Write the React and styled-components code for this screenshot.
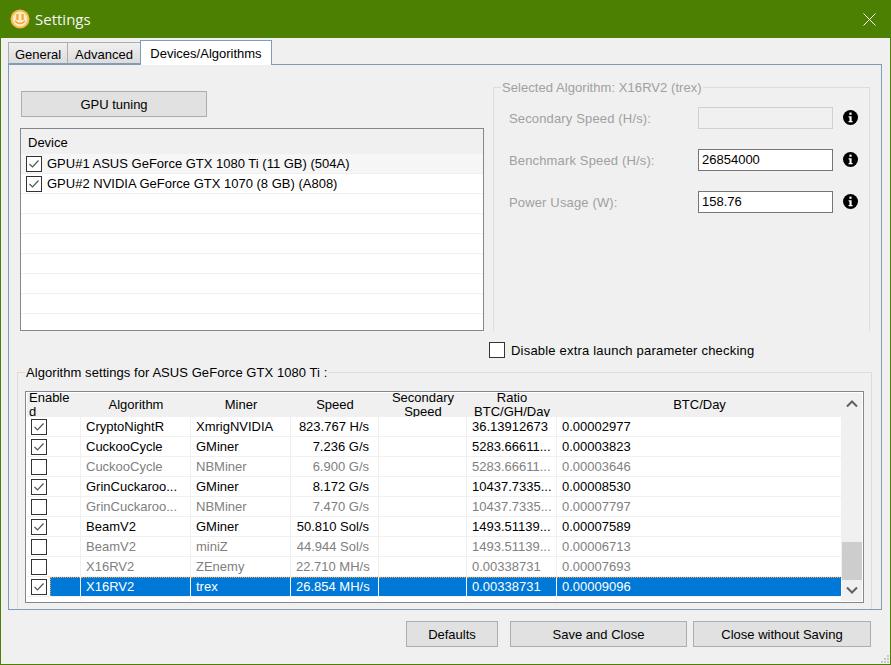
import React from 'react';
import styled, { createGlobalStyle } from 'styled-components';

const Global = createGlobalStyle`
  html, body { margin: 0; padding: 0; background: #f0f0f0; }
  * { box-sizing: border-box; }
  body { font-family: "Liberation Sans", Arial, sans-serif; font-size: 13px; color: #000; }
`;

const Window = styled.div`
  position: relative;
  width: 891px;
  height: 665px;
  background: #f0f0f0;
  border: 1px solid #4c8003;
  border-top: none;
  display: flex;
  flex-direction: column;
`;

const TitleBar = styled.div`
  height: 38px;
  margin: 0 -1px;
  background: #4c8003;
  display: flex;
  align-items: center;
  padding: 0 15px 0 10px;
  gap: 5px;
  color: #f6f6f6;
  font-family: "Open Sans", sans-serif;
  font-size: 15px;
`;

const TitleText = styled.span`
  flex: 1;
`;

const Body = styled.div`
  padding: 2px 8px 0 7px;
`;

const Tabs = styled.div`
  display: flex;
  align-items: flex-end;
  height: 24px;
`;

const Tab = styled.div`
  height: ${p => (p.$active ? '25px' : '22px')};
  width: ${p => p.$w}px;
  margin-bottom: ${p => (p.$active ? '-1px' : '0')};
  padding-top: ${p => (p.$active ? '0' : '2px')};
  display: flex;
  align-items: center;
  justify-content: center;
  background: ${p => (p.$active ? '#fff' : 'linear-gradient(#f0f0f0, #dcdcdc)')};
  border: 1px solid ${p => (p.$active ? '#7f9db9' : '#acacac')};
  border-bottom: ${p => (p.$active ? 'none' : '1px solid #7f9db9')};
  border-right: ${p => (p.$active ? '1px solid #7f9db9' : 'none')};
  position: relative;
`;

const Panel = styled.div`
  width: 874px;
  height: 546px;
  border: 1px solid #7f9db9;
  padding: 26px 0 0 8px;
  display: flex;
  flex-direction: column;
`;

const TopRow = styled.div`
  display: flex;
  height: 240px;
`;

const LeftCol = styled.div`
  width: 476px;
  flex: none;
  padding-left: 4px;
  display: flex;
  flex-direction: column;
`;

const Button = styled.div`
  width: ${p => p.$w}px;
  height: 26px;
  margin-right: ${p => p.$mr || 0}px;
  display: flex;
  align-items: center;
  justify-content: center;
  background: #e1e1e1;
  border: 1px solid #adadad;
`;

const DeviceList = styled.div`
  width: 464px;
  height: 203px;
  margin: 11px 0 0 -1px;
  border: 1px solid #828790;
  background: #fff;
  display: flex;
  flex-direction: column;
  overflow: hidden;
`;

const DeviceHead = styled.div`
  height: 25px;
  flex: none;
  padding: 6px 0 0 7px;
  background: #f0f0f0;
  line-height: 15px;
`;

const DeviceRow = styled.div`
  height: 20px;
  flex: none;
  display: flex;
  align-items: center;
  gap: 5px;
  padding-left: 5px;
  border-bottom: 1px solid #f0f0f0;
  background: ${p => (p.$soft ? '#f6f6f6' : '#fff')};
`;

const Box = styled.span`
  width: 16px;
  height: 16px;
  flex: none;
  border: 1px solid #333;
  background: #fff;
  display: flex;
  align-items: center;
  justify-content: center;
`;

const Group = styled.fieldset`
  margin: 0;
  min-width: 0;
  padding: 0;
  border: 1px solid #dcdcdc;
  border-bottom: none;
  legend {
    margin-left: ${p => p.$legendX || 0}px;
    padding: 0 1px;
    line-height: 15px;
    letter-spacing: 0.06px;
    color: ${p => (p.$muted ? '#a0a0a0' : '#000')};
  }
`;

const AlgoSide = styled(Group)`
  width: 377px;
  height: 251px;
  flex: none;
  margin-top: -11px;
  padding: 12px 0 0 15px;
  display: flex;
  flex-direction: column;
  gap: 20px;
`;

const Field = styled.div`
  display: flex;
  align-items: center;
  height: 22px;
`;

const FieldLabel = styled.span`
  width: 189px;
  color: #a0a0a0;
  letter-spacing: 0.15px;
`;

const Input = styled.div`
  width: 135px;
  height: 22px;
  border: 1px solid ${p => (p.$off ? '#d0d0d0' : '#767676')};
  background: ${p => (p.$off ? '#f0f0f0' : '#fff')};
  padding: 0 3px;
  line-height: 20px;
`;

const Info = styled.svg`
  width: 15px;
  height: 15px;
  margin: -2px 0 0 10px;
`;

const CheckRow = styled.label`
  display: flex;
  align-items: center;
  gap: 6px;
  height: 16px;
  margin: 11px 0 0 472px;
  letter-spacing: 0.2px;
`;

const AlgoGroup = styled(Group)`
  width: 855px;
  flex: 1;
  margin-top: 7px;
  padding: 0 7px;
`;

const Table = styled.div`
  width: 839px;
  height: 212px;
  margin-top: 11px;
  border: 1px solid #828790;
  background: #fff;
  display: flex;
  padding: 1px;
`;

const Rows = styled.div`
  width: 815px;
  flex: none;
  display: flex;
  flex-direction: column;
`;

const cols = '54px 110px 100px 88px 88px 90px 285px';

const HeadRow = styled.div`
  display: grid;
  grid-template-columns: ${cols};
  height: 24px;
  flex: none;
  background: #f0f0f0;
  overflow: hidden;
`;

const HeadCell = styled.div`
  height: 24px;
  display: flex;
  align-items: center;
  justify-content: ${p => (p.$left ? 'flex-start' : 'center')};
  text-align: ${p => (p.$left ? 'left' : 'center')};
  line-height: 14.5px;
  padding-left: ${p => (p.$left ? '2px' : '0')};
  padding-right: ${p => (p.$left ? '9px' : '0')};
  overflow-wrap: anywhere;
`;

const Row = styled.div`
  display: grid;
  grid-template-columns: ${cols};
  height: 20px;
  flex: none;
  color: ${p => (p.$off ? '#808080' : '#000')};
`;

const Cell = styled.div`
  height: 20px;
  line-height: ${p => (p.$sel ? '17px' : '19px')};
  padding: 0 5px;
  white-space: nowrap;
  overflow: hidden;
  text-align: ${p => (p.$right ? 'right' : 'left')};
  padding-right: ${p => (p.$right ? '9px' : '5px')};
  border-right: 1px solid ${p => (p.$sel ? '#fff' : '#f0f0f0')};
  border-bottom: 1px solid #f0f0f0;
  border-top: ${p => (p.$sel ? '1px dotted #f2a341' : 'none')};
  background: ${p => (p.$sel ? '#0078d7' : '#fff')};
  color: ${p => (p.$sel ? '#fff' : 'inherit')};
`;

const CheckCell = styled.div`
  height: 20px;
  display: flex;
  border-right: 1px solid #f0f0f0;
  border-bottom: 1px solid #f0f0f0;
  padding: 2px 0 0 4px;
`;

const CheckFill = styled.span`
  flex: 1;
  height: 19px;
  margin: -2px 0 0 3px;
  background: ${p => (p.$sel ? '#0078d7' : 'transparent')};
  border-left: ${p => (p.$sel ? '1px dotted #f2a341' : 'none')};
  border-top: ${p => (p.$sel ? '1px dotted #f2a341' : 'none')};
`;

const Filler = styled.div`
  display: grid;
  grid-template-columns: ${cols};
  flex: 1;
  div { border-right: 1px solid #f0f0f0; }
`;

const ScrollBar = styled.div`
  width: 20px;
  flex: none;
  background: #f0f0f0;
  display: flex;
  flex-direction: column;
`;

const Track = styled.div`
  flex: 1;
  display: flex;
  flex-direction: column;
  justify-content: flex-end;
`;

const Thumb = styled.div`
  height: 38px;
  background: #cdcdcd;
`;

const Arrow = styled.svg`
  width: 20px;
  height: 21px;
  flex: none;
`;

const Footer = styled.div`
  display: flex;
  justify-content: flex-end;
  gap: 6px;
  padding: 11px 11px 0 0;
`;

const Grip = styled.svg`
  position: absolute;
  right: 0;
  bottom: 0;
  width: 12px;
  height: 12px;
`;

const Check = () => (
  <svg width="12" height="10" viewBox="0 0 12 10">
    <path d="M1.5 5 L4.5 8 L10.5 1.5" fill="none" stroke="#555" strokeWidth="1.2" />
  </svg>
);

const InfoIcon = () => (
  <Info viewBox="0 0 15 15">
    <circle cx="7.5" cy="7.5" r="7.5" fill="#000" />
    <rect x="6.4" y="2.6" width="2.2" height="2.2" fill="#fff" />
    <path d="M5.6 6.2 H8.6 V11 H9.6 V12.2 H5.6 V11 H6.5 V7.4 H5.6 Z" fill="#fff" />
  </Info>
);

const Logo = () => (
  <svg width="20" height="20" viewBox="0 0 20 20">
    <circle cx="10" cy="10" r="9.5" fill="#f7bb4d" />
    <circle cx="10" cy="10" r="7.4" fill="#fdebc4" />
    <rect x="6.3" y="5" width="2.2" height="6" fill="#eda63a" />
    <rect x="11.5" y="5" width="2.2" height="6" fill="#eda63a" />
    <path d="M5 12 Q10 17 15 12" fill="none" stroke="#eda63a" strokeWidth="1.6" />
  </svg>
);

const devices = [
  'GPU#1 ASUS GeForce GTX 1080 Ti (11 GB) (504A)',
  'GPU#2 NVIDIA GeForce GTX 1070 (8 GB) (A808)',
];

const algos = [
  { on: true, name: 'CryptoNightR', miner: 'XmrigNVIDIA', speed: '823.767 H/s', ratio: '36.13912673', btc: '0.00002977' },
  { on: true, name: 'CuckooCycle', miner: 'GMiner', speed: '7.236 G/s', ratio: '5283.66611...', btc: '0.00003823' },
  { on: false, name: 'CuckooCycle', miner: 'NBMiner', speed: '6.900 G/s', ratio: '5283.66611...', btc: '0.00003646' },
  { on: true, name: 'GrinCuckaroo...', miner: 'GMiner', speed: '8.172 G/s', ratio: '10437.7335...', btc: '0.00008530' },
  { on: false, name: 'GrinCuckaroo...', miner: 'NBMiner', speed: '7.470 G/s', ratio: '10437.7335...', btc: '0.00007797' },
  { on: true, name: 'BeamV2', miner: 'GMiner', speed: '50.810 Sol/s', ratio: '1493.51139...', btc: '0.00007589' },
  { on: false, name: 'BeamV2', miner: 'miniZ', speed: '44.944 Sol/s', ratio: '1493.51139...', btc: '0.00006713' },
  { on: false, name: 'X16RV2', miner: 'ZEnemy', speed: '22.710 MH/s', ratio: '0.00338731', btc: '0.00007693' },
  { on: true, sel: true, name: 'X16RV2', miner: 'trex', speed: '26.854 MH/s', ratio: '0.00338731', btc: '0.00009096' },
];

export default function App() {
  return (
    <Window>
      <Global />
      <TitleBar>
        <Logo />
        <TitleText>Settings</TitleText>
        <svg width="13" height="13" viewBox="0 0 13 13">
          <path d="M0.5 0.5 L12.5 12.5 M12.5 0.5 L0.5 12.5" stroke="#fff" strokeWidth="1" />
        </svg>
      </TitleBar>
      <Body>
        <Tabs>
          <Tab $w={59}>General</Tab>
          <Tab $w={73}>Advanced</Tab>
          <Tab $w={132} $active>Devices/Algorithms</Tab>
        </Tabs>
        <Panel>
          <TopRow>
            <LeftCol>
              <Button $w={186}>GPU tuning</Button>
              <DeviceList>
                <DeviceHead>Device</DeviceHead>
                {devices.map((d, i) => (
                  <DeviceRow key={d} $soft={i === 0}>
                    <Box><Check /></Box>
                    {d}
                  </DeviceRow>
                ))}
                {[0, 1, 2, 3, 4, 5, 6].map(i => <DeviceRow key={i} />)}
              </DeviceList>
            </LeftCol>
            <AlgoSide $muted $legendX={-8}>
              <legend>Selected Algorithm: X16RV2 (trex)</legend>
              <Field>
                <FieldLabel>Secondary Speed (H/s):</FieldLabel>
                <Input $off />
                <InfoIcon />
              </Field>
              <Field>
                <FieldLabel>Benchmark Speed (H/s):</FieldLabel>
                <Input>26854000</Input>
                <InfoIcon />
              </Field>
              <Field>
                <FieldLabel>Power Usage (W):</FieldLabel>
                <Input>158.76</Input>
                <InfoIcon />
              </Field>
            </AlgoSide>
          </TopRow>
          <CheckRow>
            <Box />
            Disable extra launch parameter checking
          </CheckRow>
          <AlgoGroup>
            <legend>Algorithm settings for ASUS GeForce GTX 1080 Ti :</legend>
            <Table>
              <Rows>
                <HeadRow>
                  <HeadCell $left>Enabled</HeadCell>
                  <HeadCell>Algorithm</HeadCell>
                  <HeadCell>Miner</HeadCell>
                  <HeadCell>Speed</HeadCell>
                  <HeadCell>Secondary Speed</HeadCell>
                  <HeadCell>Ratio BTC/GH/Day</HeadCell>
                  <HeadCell>BTC/Day</HeadCell>
                </HeadRow>
                {algos.map((a, i) => (
                  <Row key={i} $off={!a.on}>
                    <CheckCell>
                      <Box>{a.on && <Check />}</Box>
                      <CheckFill $sel={a.sel} />
                    </CheckCell>
                    <Cell $sel={a.sel}>{a.name}</Cell>
                    <Cell $sel={a.sel}>{a.miner}</Cell>
                    <Cell $sel={a.sel} $right>{a.speed}</Cell>
                    <Cell $sel={a.sel} />
                    <Cell $sel={a.sel}>{a.ratio}</Cell>
                    <Cell $sel={a.sel}>{a.btc}</Cell>
                  </Row>
                ))}
                <Filler>
                  <div /><div /><div /><div /><div /><div /><div />
                </Filler>
              </Rows>
              <ScrollBar>
                <Arrow viewBox="0 0 20 21">
                  <path d="M5 13.5 L10 8.5 L15 13.5" fill="none" stroke="#606060" strokeWidth="2" />
                </Arrow>
                <Track><Thumb /></Track>
                <Arrow viewBox="0 0 20 21">
                  <path d="M5 7.5 L10 12.5 L15 7.5" fill="none" stroke="#606060" strokeWidth="2" />
                </Arrow>
              </ScrollBar>
            </Table>
          </AlgoGroup>
        </Panel>
        <Footer>
          <Button $w={92} $mr={6}>Defaults</Button>
          <Button $w={177}>Save and Close</Button>
          <Button $w={178}>Close without Saving</Button>
        </Footer>
      </Body>
      <Grip viewBox="0 0 12 12">
        <rect x="9" y="3" width="2" height="2" fill="#c8c8c8" />
        <rect x="6" y="6" width="2" height="2" fill="#c8c8c8" />
        <rect x="9" y="6" width="2" height="2" fill="#c8c8c8" />
        <rect x="3" y="9" width="2" height="2" fill="#c8c8c8" />
        <rect x="6" y="9" width="2" height="2" fill="#c8c8c8" />
        <rect x="9" y="9" width="2" height="2" fill="#c8c8c8" />
      </Grip>
    </Window>
  );
}
